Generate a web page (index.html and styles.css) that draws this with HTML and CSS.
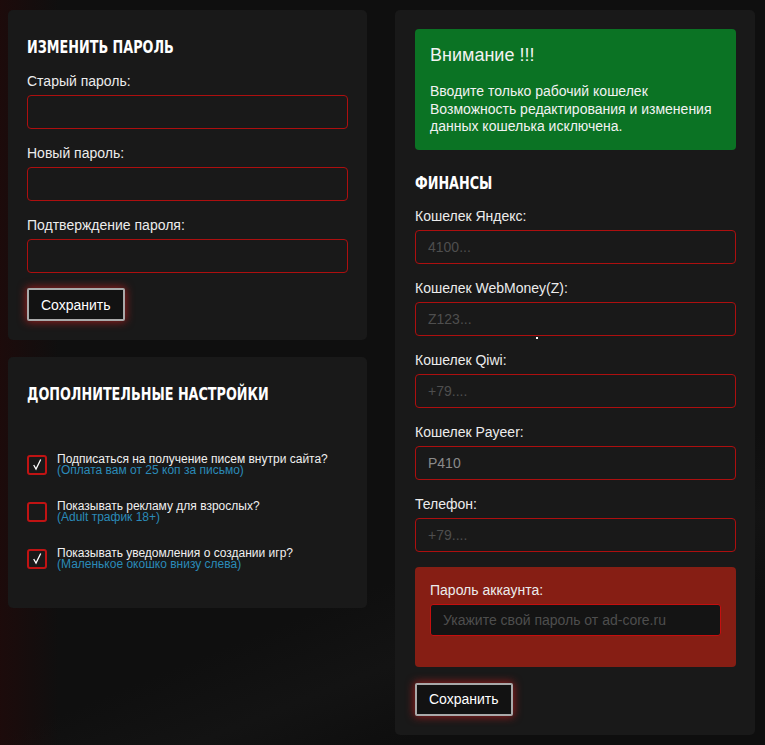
FILE: index.html
```html
<!DOCTYPE html>
<html lang="ru">
<head>
  <meta charset="UTF-8">
  <meta name="viewport" content="width=device-width, initial-scale=1.0">
  <title>Настройки</title>
  <link rel="stylesheet" href="styles.css">
</head>
<body>

<div class="page">
  <div class="col-left">
    <div class="card">
      <h2>Изменить пароль</h2>
      <label class="field-label">Старый пароль:</label>
      <input class="field" type="password">
      <label class="field-label">Новый пароль:</label>
      <input class="field" type="password">
      <label class="field-label">Подтверждение пароля:</label>
      <input class="field" type="password">
      <button class="btn">Сохранить</button>
    </div>

    <div class="card card-settings">
      <h2>Дополнительные настройки</h2>
      <div class="options">
        <div class="option">
          <span class="check"><svg viewBox="0 0 16 16"><polyline points="4.7,8 7,12 11.7,2.5"/></svg></span>
          <div class="option-text">
            Подписаться на получение писем внутри сайта?
            <span class="hint">(Оплата вам от 25 коп за письмо)</span>
          </div>
        </div>
        <div class="option">
          <span class="check"></span>
          <div class="option-text">
            Показывать рекламу для взрослых?
            <span class="hint">(Adult трафик 18+)</span>
          </div>
        </div>
        <div class="option">
          <span class="check"><svg viewBox="0 0 16 16"><polyline points="4.7,8 7,12 11.7,2.5"/></svg></span>
          <div class="option-text">
            Показывать уведомления о создании игр?
            <span class="hint">(Маленькое окошко внизу слева)</span>
          </div>
        </div>
      </div>
    </div>
  </div>

  <div class="card col-right">
    <div class="alert">
      <div class="alert-title">Внимание !!!</div>
      <p>Вводите только рабочий кошелек<br>Возможность редактирования и изменения данных кошелька исключена.</p>
    </div>

    <h2>Финансы</h2>
    <label class="field-label">Кошелек Яндекс:</label>
    <input class="field" type="text" placeholder="4100...">
    <label class="field-label">Кошелек WebMoney(Z):</label>
    <input class="field" type="text" placeholder="Z123...">
    <label class="field-label">Кошелек Qiwi:</label>
    <input class="field" type="text" placeholder="+79....">
    <label class="field-label">Кошелек Payeer:</label>
    <input class="field" type="text" value="P410">
    <label class="field-label">Телефон:</label>
    <input class="field" type="text" placeholder="+79....">

    <div class="account-box">
      <label class="field-label">Пароль аккаунта:</label>
      <input class="field" type="password" placeholder="Укажите свой пароль от ad-core.ru">
    </div>

    <button class="btn">Сохранить</button>
    <span class="cursor-dot"></span>
  </div>
</div>

</body>
</html>
```

FILE: styles.css
```css
body {
  margin: 10px 8px;
  font-family: "Liberation Sans", Arial, sans-serif;
  color: #ececec;
  background-color: #0f0f0f;
  background-image:
    linear-gradient(90deg, rgba(38, 8, 8, 0.6) 0, rgba(15, 15, 15, 0) 60px),
    linear-gradient(158deg, #0f0f0f 0, #0f0f0f 70%, #131313 78%, #0e0e0e 86%);
  min-height: 725px;
}
.page {
  display: flex;
  align-items: flex-start;
  gap: 28px;
}
.col-left {
  width: 359px;
  display: flex;
  flex-direction: column;
  gap: 17px;
}
.card {
  box-sizing: border-box;
  background: #191919;
  border-radius: 5px;
  padding: 26px 19px 19px;
}
.col-right {
  position: relative;
  width: 360px;
  padding: 19px 19px 19px 20px;
}
h2 {
  margin: 0 0 14px;
  font-family: "DejaVu Sans Condensed", "Liberation Sans Narrow", sans-serif;
  font-stretch: condensed;
  font-weight: bold;
  font-size: 18px;
  line-height: 22px;
  text-transform: uppercase;
  color: #fff;
  white-space: nowrap;
  transform: scaleX(0.79);
  transform-origin: left center;
}
.field-label {
  display: block;
  font-size: 14px;
  line-height: 18px;
  margin-bottom: 5px;
}
.field {
  display: block;
  box-sizing: border-box;
  width: 100%;
  height: 34px;
  margin: 0 0 15px;
  padding: 0 12px;
  border: 1px solid #ad0f0f;
  border-radius: 4px;
  background: #191919;
  color: #8a8a8a;
  font-family: "Liberation Sans", Arial, sans-serif;
  font-size: 14px;
  outline: none;
}
.field::placeholder {
  color: #4e4e4e;
}
.btn {
  display: block;
  height: 33px;
  padding: 0 12px;
  border: 2px solid #a9a9a9;
  border-radius: 2px;
  background: #121212;
  color: #fff;
  font-family: "Liberation Sans", Arial, sans-serif;
  font-size: 14px;
  box-shadow: 0 0 8px 1px rgba(200, 30, 30, 0.7);
  cursor: pointer;
}

/* дополнительные настройки */
.card-settings {
  padding-bottom: 38px;
}
.options {
  margin-top: 49px;
  display: flex;
  flex-direction: column;
  gap: 25px;
}
.option {
  display: flex;
  align-items: center;
  gap: 10px;
}
.check {
  box-sizing: border-box;
  width: 20px;
  height: 20px;
  flex: none;
  border: 2px solid #c01313;
  border-radius: 3px;
}
.check svg {
  display: block;
  width: 16px;
  height: 16px;
  fill: none;
  stroke: #fff;
  stroke-width: 1.3;
}
.option-text {
  font-size: 12px;
  line-height: 11px;
  color: #f0f0f0;
}
.hint {
  display: block;
  color: #2a8ab8;
}

/* правая колонка */
.alert {
  background: #0b7324;
  border-radius: 4px;
  padding: 15px 15px 14px;
  margin-bottom: 22px;
  color: #f2f2f2;
}
.alert-title {
  font-size: 18px;
  line-height: 22px;
}
.alert p {
  margin: 17px 0 0;
  font-size: 14px;
  line-height: 17.5px;
}
.col-right h2 {
  margin-bottom: 13px;
}
.account-box {
  background: #861e14;
  border-radius: 4px;
  padding: 14px 15px 16px;
  margin-bottom: 16px;
}
.account-box .field {
  height: 32px;
  background: #141414;
  border-color: #c40f0f;
  border-radius: 3px;
}
.cursor-dot {
  position: absolute;
  left: 141px;
  top: 327px;
  width: 2px;
  height: 2px;
  background: #fff;
}
```
